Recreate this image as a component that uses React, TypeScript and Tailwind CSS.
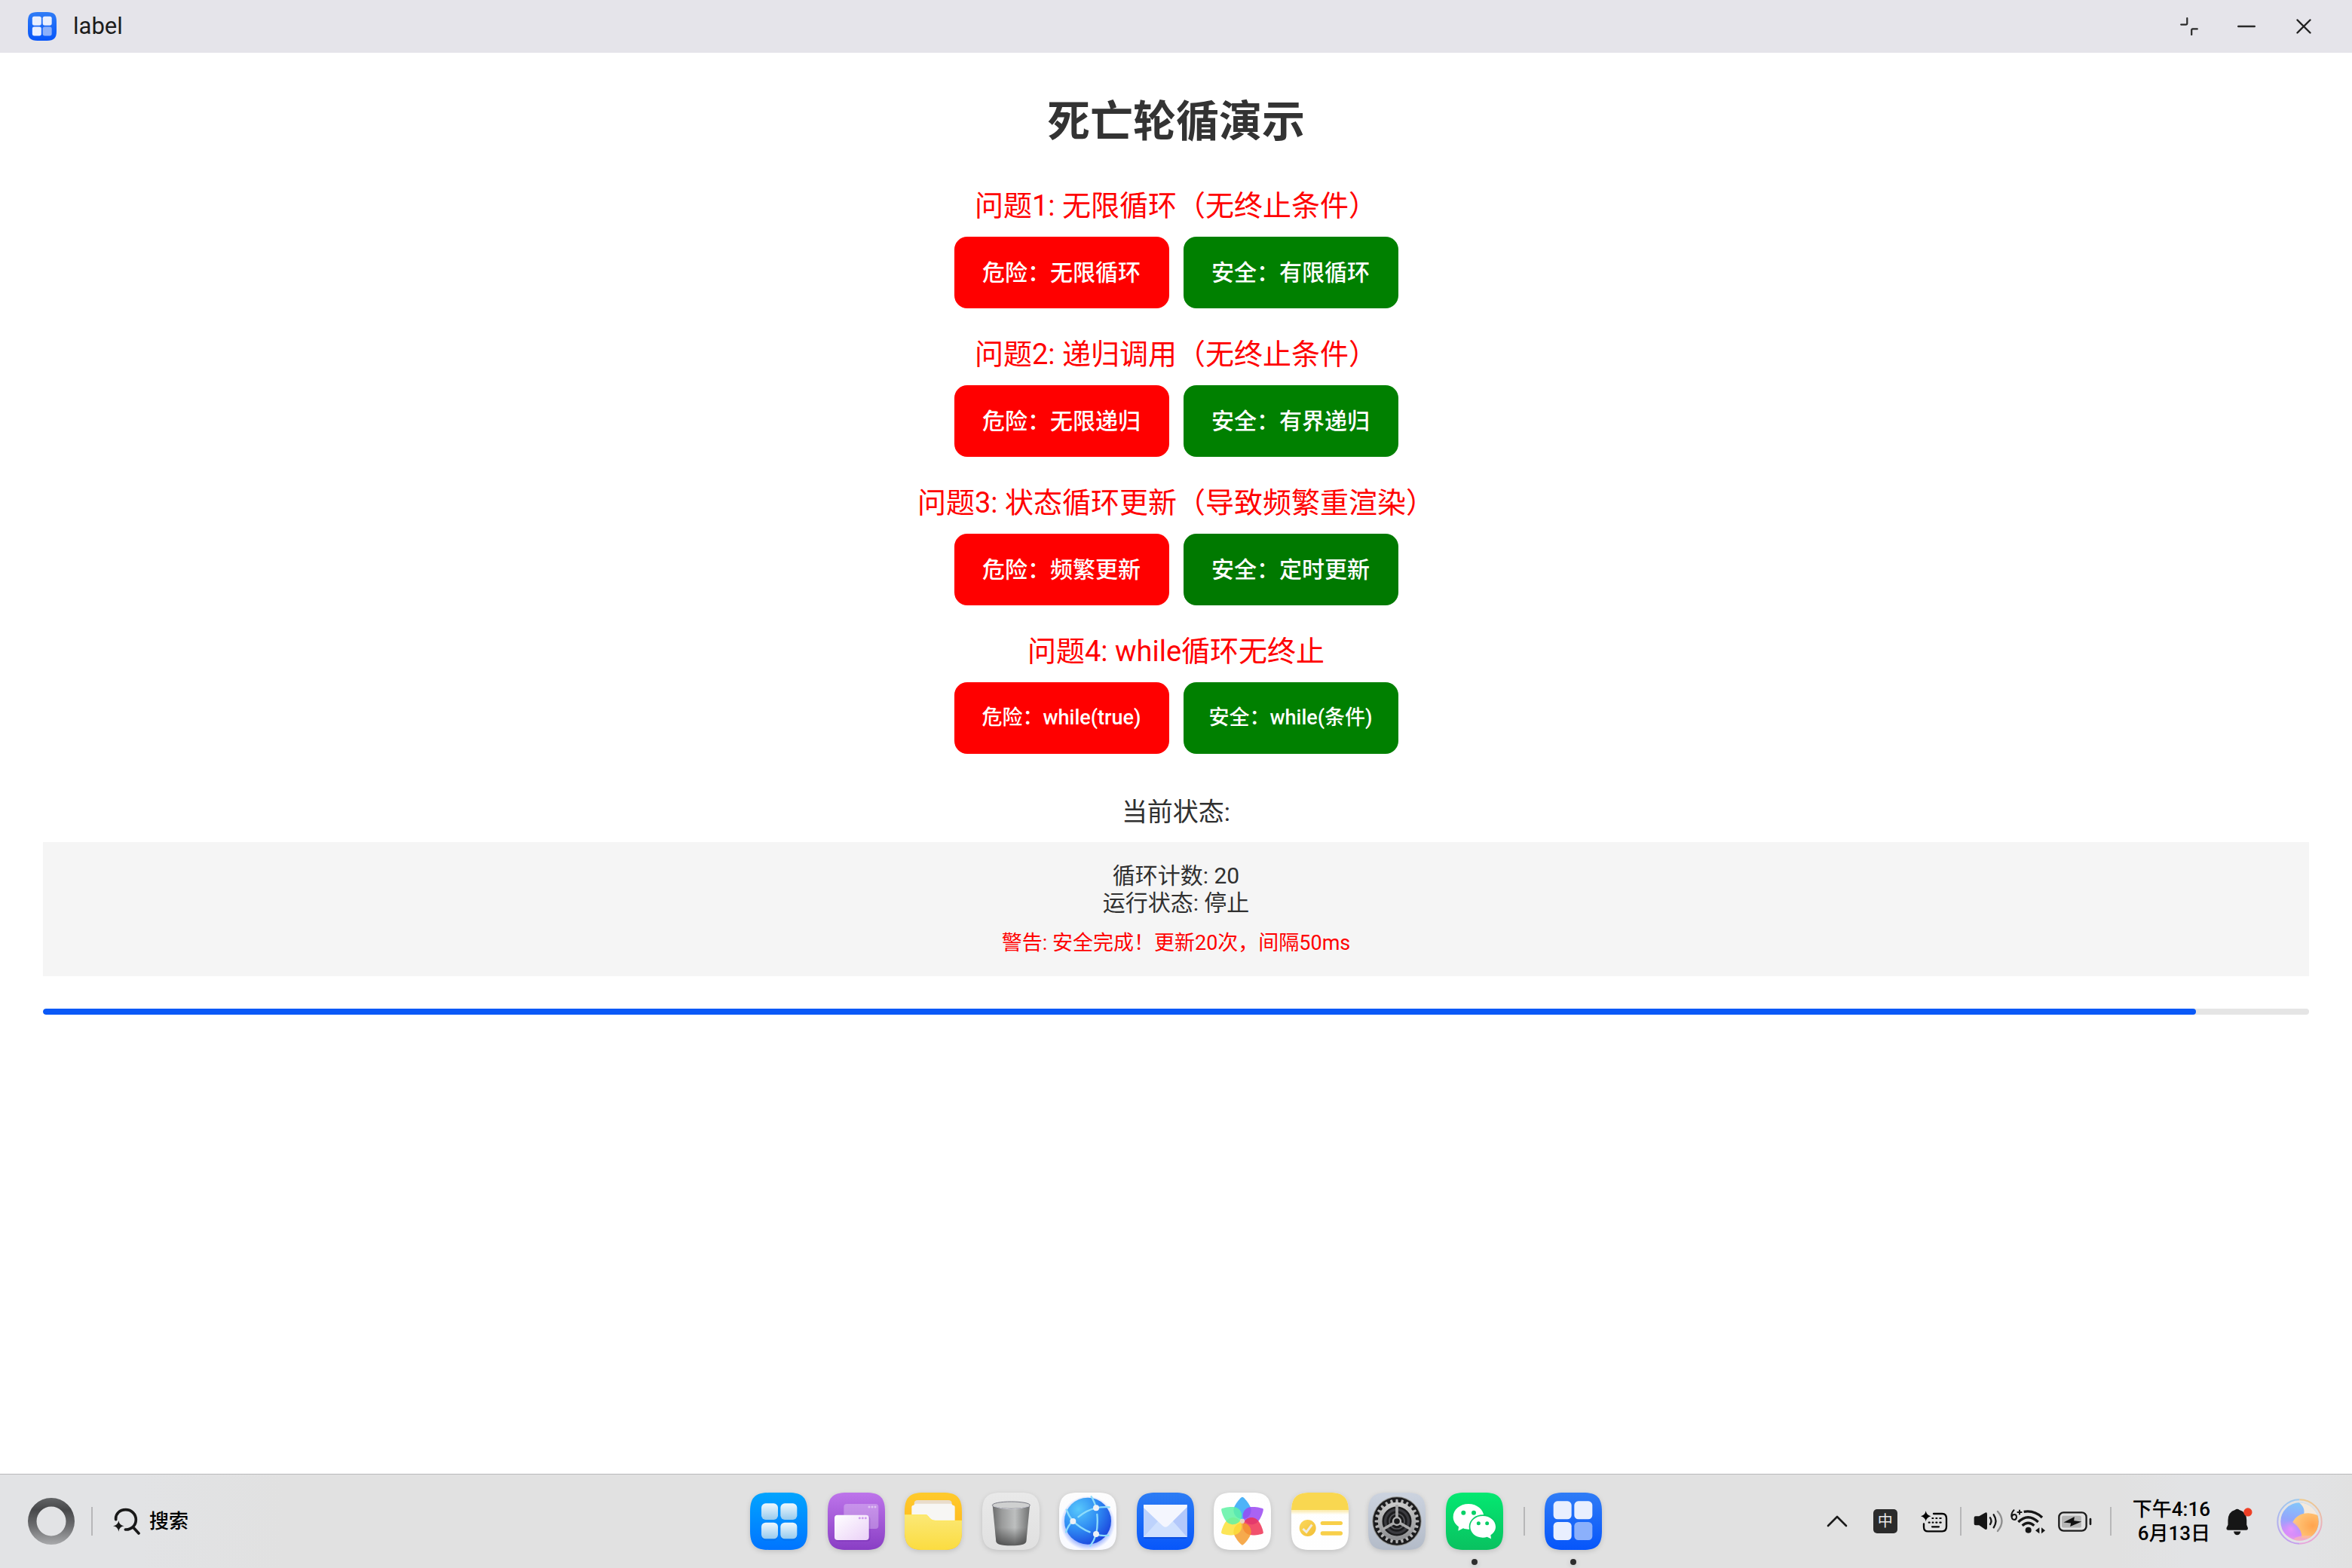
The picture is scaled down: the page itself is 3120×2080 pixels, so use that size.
import type { ReactNode } from "react";

const SQUIRCLE =
  "M0 76C0 20 20 0 76 0H152C208 0 228 20 228 76V152C228 208 208 228 152 228H76C20 228 0 208 0 152Z";

function Gradient({ id, from, to, diagonal = false }: { id: string; from: string; to: string; diagonal?: boolean }) {
  return (
    <linearGradient id={id} x1="0" y1="0" x2={diagonal ? "1" : "0"} y2="1">
      <stop offset="0" stopColor={from} />
      <stop offset="1" stopColor={to} />
    </linearGradient>
  );
}

function AppIcon({ id, from, to, size = "size-[76px]", children }: { id: string; from: string; to: string; size?: string; children: ReactNode }) {
  return (
    <svg viewBox="0 0 228 228" className={`${size} block`} aria-hidden="true">
      <defs>
        <Gradient id={`${id}-bg`} from={from} to={to} />
        <clipPath id={`${id}-clip`}>
          <path d={SQUIRCLE} />
        </clipPath>
      </defs>
      <path d={SQUIRCLE} fill={`url(#${id}-bg)`} />
      <g clipPath={`url(#${id}-clip)`}>{children}</g>
    </svg>
  );
}

function LabelIcon({ id, size }: { id: string; size?: string }) {
  return (
    <AppIcon id={id} from="#2f7cf6" to="#0655fa" size={size}>
      <g fill="#e9effe">
        <rect x="35" y="34" width="72" height="72" rx="16" />
        <rect x="118" y="34" width="72" height="72" rx="16" />
        <rect x="35" y="117" width="72" height="72" rx="16" />
        <rect x="118" y="117" width="72" height="72" rx="16" fill="#8bb0fb" />
      </g>
    </AppIcon>
  );
}

function LauncherIcon() {
  return (
    <AppIcon id="launcher" from="#02a4ff" to="#0074ff">
      <defs>
        <Gradient id="launcher-tile" from="#eff8fd" to="#96caee" />
      </defs>
      <g fill="#0060d8" opacity="0.25">
        <rect x="45" y="126" width="66" height="65" rx="17" />
        <rect x="121" y="126" width="66" height="65" rx="17" />
      </g>
      <g fill="url(#launcher-tile)">
        <rect x="45" y="43" width="66" height="65" rx="17" />
        <rect x="121" y="43" width="66" height="65" rx="17" />
        <rect x="45" y="119" width="66" height="65" rx="17" />
        <rect x="121" y="119" width="66" height="65" rx="17" />
      </g>
    </AppIcon>
  );
}

function WindowsIcon() {
  return (
    <AppIcon id="windows" from="#bd74ea" to="#893ec4">
      <defs>
        <Gradient id="windows-front" from="#ffffff" to="#ead0f7" diagonal />
      </defs>
      <rect x="64" y="45" width="138" height="99" rx="12" fill="#fff" opacity="0.28" />
      <g fill="#fff" opacity="0.45">
        <circle cx="165" cy="57" r="4.5" />
        <circle cx="177" cy="57" r="4.5" />
        <circle cx="189" cy="57" r="4.5" />
      </g>
      <rect x="29" y="94" width="140" height="100" rx="12" fill="#5d1c9c" opacity="0.25" />
      <rect x="27" y="89" width="137" height="100" rx="12" fill="url(#windows-front)" />
      <g fill="#cf9bee">
        <circle cx="127" cy="101" r="4.5" />
        <circle cx="139" cy="101" r="4.5" />
        <circle cx="151" cy="101" r="4.5" />
      </g>
    </AppIcon>
  );
}

function FilesIcon() {
  return (
    <AppIcon id="files" from="#ffca2c" to="#ffb016">
      <defs>
        <Gradient id="files-front" from="#fbe876" to="#fbdc40" />
      </defs>
      <path d="M38 60V44Q38 30 52 30H174Q188 30 188 44V60Z" fill="#e9dccb" />
      <path d="M28 140V58Q28 50 36 50L42 44H186L192 50Q200 50 200 58V140Z" fill="#f7f6f4" />
      <path d="M0 88H84C96 88 98 111 122 111H228V228H0Z" fill="url(#files-front)" />
      <path d="M0 89H84C96 89 98 112 122 112H228" fill="none" stroke="#ffe95c" strokeWidth="3" />
    </AppIcon>
  );
}

function TrashIcon() {
  return (
    <AppIcon id="trash" from="#e9e9e9" to="#e0e0e0">
      <defs>
        <linearGradient id="trash-body" x1="0" x2="1" y1="0" y2="0">
          <stop offset="0" stopColor="#6c6d6d" />
          <stop offset="0.25" stopColor="#9a9b9b" />
          <stop offset="0.6" stopColor="#bdbfbf" />
          <stop offset="1" stopColor="#707171" />
        </linearGradient>
        <linearGradient id="trash-shade" x1="0" x2="0" y1="0" y2="1">
          <stop offset="0.55" stopColor="#333" stopOpacity="0" />
          <stop offset="1" stopColor="#333" stopOpacity="0.7" />
        </linearGradient>
      </defs>
      <path d="M41 52L55 194Q58 211 115 211Q172 211 175 194L189 52Z" fill="url(#trash-body)" />
      <path d="M41 52L55 194Q58 211 115 211Q172 211 175 194L189 52Z" fill="url(#trash-shade)" />
      <ellipse cx="115" cy="50" rx="75" ry="14" fill="#cfd0d0" stroke="#777882" strokeWidth="3" />
      <path d="M44 54Q115 78 186 54" fill="none" stroke="#c9c9d0" strokeWidth="3" />
    </AppIcon>
  );
}

function BrowserIcon() {
  return (
    <AppIcon id="browser" from="#fdfdfd" to="#f9faff">
      <defs>
        <radialGradient id="browser-globe" cx="0.3" cy="0.25" r="0.85">
          <stop offset="0" stopColor="#58c8fb" />
          <stop offset="0.5" stopColor="#2f8cf3" />
          <stop offset="1" stopColor="#1a40dc" />
        </radialGradient>
        <radialGradient id="browser-glow">
          <stop offset="0.75" stopColor="#4a74ff" stopOpacity="0.6" />
          <stop offset="1" stopColor="#4a74ff" stopOpacity="0" />
        </radialGradient>
        <clipPath id="browser-clip">
          <circle cx="114" cy="113" r="93" />
        </clipPath>
      </defs>
      <circle cx="114" cy="121" r="108" fill="url(#browser-glow)" />
      <circle cx="114" cy="113" r="93" fill="url(#browser-globe)" />
      <g clipPath="url(#browser-clip)" fill="none" stroke="#8edcfb" strokeWidth="7" strokeLinecap="round">
        <path d="M76 97Q108 70 147 61Q172 56 200 58" />
        <path d="M147 61Q140 34 128 16" />
        <path d="M151 87Q155 130 147 165Q139 192 124 212" />
        <path d="M55 113Q86 144 122 157" />
        <path d="M147 165Q168 174 196 170" />
        <path d="M55 113Q38 94 29 68" />
        <path d="M55 113Q34 132 27 158" />
      </g>
      <g fill="#eef1f6">
        <circle cx="55" cy="114" r="12" />
        <circle cx="147" cy="61" r="12" />
        <circle cx="147" cy="165" r="12" />
      </g>
    </AppIcon>
  );
}

function MailIcon() {
  return (
    <AppIcon id="mail" from="#2c7cf4" to="#0756fa">
      <defs>
        <Gradient id="mail-body" from="#a5bffb" to="#dbe9fe" />
        <clipPath id="mail-clip">
          <rect x="27" y="48" width="173" height="129" rx="10" />
        </clipPath>
      </defs>
      <rect x="27" y="54" width="173" height="129" rx="10" fill="#053bbd" opacity="0.4" />
      <g clipPath="url(#mail-clip)">
        <rect x="27" y="48" width="173" height="129" fill="url(#mail-body)" />
        <path d="M27 48L95 112L27 177Z" fill="#bdd2fc" />
        <path d="M200 48L132 112L200 177Z" fill="#b3c8fb" />
        <path d="M27 177L86 112H142L200 177Z" fill="#cfe0fe" />
        <path d="M27 48H200V58L126 131Q114 143 102 131L27 60Z" fill="#f4f6fe" />
      </g>
    </AppIcon>
  );
}

const PETALS = [
  { color: "#2ea6f7", turn: 0 },
  { color: "#9a48f2", turn: 60 },
  { color: "#ee3154", turn: 120 },
  { color: "#f59b2e", turn: 180 },
  { color: "#fbe039", turn: 240 },
  { color: "#5ff2a4", turn: 300 },
];

function GalleryIcon() {
  return (
    <AppIcon id="gallery" from="#ffffff" to="#fefefe">
      {PETALS.map((p) => (
        <path
          key={p.color}
          d="M0 -96C6 -96 35 -62 35 -44C35 -22 19 -8 0 -8C-19 -8 -35 -22 -35 -44C-35 -62 -6 -96 0 -96Z"
          fill={p.color}
          opacity="0.85"
          transform={`translate(114 113) rotate(${p.turn})`}
        />
      ))}
      <circle cx="114" cy="113" r="9" fill="#e8d6c0" />
    </AppIcon>
  );
}

function NotesIcon() {
  return (
    <AppIcon id="notes" from="#ffffff" to="#fefefe">
      <defs>
        <Gradient id="notes-fade" from="#fbe9a8" to="#ffffff" />
        <Gradient id="notes-circle" from="#fbd95c" to="#f2be36" diagonal />
      </defs>
      <rect width="228" height="70" fill="#f9d750" />
      <rect y="70" width="228" height="18" fill="url(#notes-fade)" />
      <circle cx="65" cy="141" r="33" fill="url(#notes-circle)" />
      <path d="M46 144L60 157L82 128" fill="none" stroke="#efece4" strokeWidth="9" />
      <g fill="#f8cf49">
        <rect x="116" y="114" width="88" height="15" rx="7.5" />
        <rect x="116" y="154" width="88" height="16" rx="8" />
      </g>
    </AppIcon>
  );
}

function SettingsIcon() {
  const teeth = Array.from({ length: 24 }, (_, i) => i * 15);
  return (
    <AppIcon id="settings" from="#ccd3df" to="#b3bbc8">
      <defs>
        <Gradient id="settings-metal" from="#c9c9c9" to="#8f9093" />
      </defs>
      <circle cx="114" cy="114" r="98" fill="#8d8d88" />
      <circle cx="114" cy="114" r="95" fill="#1b1b1d" />
      <g fill="#b4b4b5">
        {teeth.map((a) => (
          <path key={a} d="M108 44L110 26H118L120 44Z" transform={`rotate(${a} 114 114)`} />
        ))}
      </g>
      <circle cx="114" cy="114" r="67" fill="none" stroke="url(#settings-metal)" strokeWidth="17" />
      <circle cx="114" cy="114" r="46" fill="none" stroke="#3a3a3f" strokeWidth="10" />
      <circle cx="114" cy="114" r="30" fill="none" stroke="#55555a" strokeWidth="5" />
      <g stroke="#a9a9aa" strokeWidth="11">
        <path d="M114 100V48" />
        <path d="M114 100V48" transform="rotate(120 114 114)" />
        <path d="M114 100V48" transform="rotate(240 114 114)" />
      </g>
      <circle cx="114" cy="114" r="15" fill="#1b1b1d" stroke="#b0b0b1" strokeWidth="7" />
    </AppIcon>
  );
}

function WechatIcon() {
  return (
    <AppIcon id="wechat" from="#04e871" to="#09c160">
      <path
        d="M90 45C56 45 29 68 29 97C29 113 37 126 51 136L49 152L69 142C76 145 83 146 90 146C124 146 151 124 151 96C151 68 124 45 90 45Z"
        fill="#fff"
      />
      <circle cx="70" cy="80" r="9" fill="#06d167" />
      <circle cx="111" cy="80" r="9" fill="#06d167" />
      <path
        d="M147 93C118 93 97 112 97 136C97 160 118 179 147 179C153 179 159 178 164 176L180 184L178 169C191 161 198 149 198 136C198 112 176 93 147 93Z"
        fill="#fff"
        stroke="#07cc66"
        strokeWidth="10"
        paintOrder="stroke"
      />
      <circle cx="130" cy="122" r="7.5" fill="#07cc66" />
      <circle cx="164" cy="122" r="7.5" fill="#07cc66" />
    </AppIcon>
  );
}

function RestoreGlyph() {
  return (
    <svg viewBox="0 0 24 24" className="block size-6" fill="none" stroke="#2a2a2a" strokeWidth="2.2" strokeLinecap="round" aria-hidden="true">
      <path d="M1.2 9.6H8Q9.3 9.6 9.3 8.3V1.2M15.2 23V17Q15.2 15.4 16.8 15.4H22.8" />
    </svg>
  );
}

function MinimizeGlyph() {
  return (
    <svg viewBox="0 0 24 24" className="block size-6" stroke="#2a2a2a" strokeWidth="2.4" strokeLinecap="round" aria-hidden="true">
      <path d="M1.2 12H22.8" />
    </svg>
  );
}

function CloseGlyph() {
  return (
    <svg viewBox="0 0 24 24" className="block size-6" stroke="#222" strokeWidth="2.4" strokeLinecap="round" aria-hidden="true">
      <path d="M3.5 3.5L20.5 20.5M20.5 3.5L3.5 20.5" />
    </svg>
  );
}

function RingIcon() {
  return (
    <svg viewBox="0 0 64 64" className="block size-16" aria-hidden="true">
      <defs>
        <linearGradient id="ring" x1="0" y1="0" x2="0" y2="1">
          <stop offset="0" stopColor="#626466" />
          <stop offset="0.25" stopColor="#47484a" />
          <stop offset="0.6" stopColor="#6c6d6f" />
          <stop offset="1" stopColor="#a9aaac" />
        </linearGradient>
      </defs>
      <path fillRule="evenodd" fill="url(#ring)" d="M32 1A31 31 0 1 1 32 63A31 31 0 1 1 32 1ZM32 12.5A19.5 19.5 0 1 0 32 51.5A19.5 19.5 0 1 0 32 12.5Z" />
    </svg>
  );
}

function SearchIcon() {
  return (
    <svg viewBox="450 178 108 108" className="block size-9" fill="none" stroke="#191919" strokeWidth="11" strokeLinecap="round" aria-hidden="true">
      <path d="M461 225C459 202 477 186 500 186C524 186 541 204 541 226C541 248 524 266 499 265M530 256L552 280" />
      <path d="M472 230Q475 248 494 251Q475 254 472 273Q469 254 450 251Q469 248 472 230Z" fill="#191919" stroke="none" />
    </svg>
  );
}

function ChevronIcon() {
  return (
    <svg viewBox="0 0 28 16" className="block h-4 w-7" fill="none" stroke="#1a1a1a" strokeWidth="2.6" strokeLinecap="round" strokeLinejoin="round" aria-hidden="true">
      <path d="M2 14L14 2L26 14" />
    </svg>
  );
}

function KeyboardIcon() {
  return (
    <svg viewBox="447 159 108 87" className="block h-[29px] w-9" fill="none" stroke="#050505" strokeWidth="7" strokeLinecap="round" aria-hidden="true">
      <path d="M498 171H532Q549 171 549 190V222Q549 241 532 241H476Q459 241 459 224V211" />
      <path d="M493 189H496M508 189H511M523 189H527M479 206H482M494 206H496M508 206H511M523 206H527M492 223H519" strokeWidth="6.5" />
      <path d="M467 160Q470 177 487 181Q470 185 467 202Q464 185 447 181Q464 177 467 160Z" fill="#050505" stroke="none" />
    </svg>
  );
}

function VolumeIcon() {
  return (
    <svg viewBox="653 161 120 90" className="block h-[30px] w-10" fill="none" strokeLinecap="round" aria-hidden="true">
      <path d="M661 186H675L699 172Q707 168 707 178V232Q707 242 699 238L675 222H661Q655 222 655 216V192Q655 186 661 186Z" fill="#161616" />
      <path d="M719 192Q728 205 719 218" stroke="#161616" strokeWidth="7" />
      <path d="M733 180Q750 205 733 231" stroke="#161616" strokeWidth="7" />
      <path d="M749 167Q782 205 749 245" stroke="#8f8f8f" strokeWidth="7" />
    </svg>
  );
}

function WifiIcon() {
  return (
    <svg viewBox="801 150 138 102" className="block h-[34px] w-[46px]" fill="none" stroke="#161616" aria-hidden="true">
      <path d="M854 163Q896 156 927 186" strokeWidth="10" />
      <path d="M832 204Q871 166 911 204" strokeWidth="10" />
      <path d="M848 218Q871 197 895 218" strokeWidth="10" />
      <circle cx="872" cy="236" r="12" fill="#161616" stroke="none" />
      <path d="M816 155Q803 168 805 182Q807 195 816 195Q825 195 825 184Q825 174 816 174Q808 174 806 184" strokeWidth="6" />
      <path d="M837 155V175M827 165H847" strokeWidth="6" />
      <path d="M916 226V250L900 238ZM924 226V250L939 238Z" fill="#161616" stroke="none" />
    </svg>
  );
}

function BatteryIcon() {
  return (
    <svg viewBox="992 162 134 80" className="block h-[27px] w-[45px]" fill="none" aria-hidden="true">
      <rect x="996" y="166" width="108" height="72" rx="18" stroke="#1c1c1c" strokeWidth="7" />
      <rect x="1007" y="179" width="77" height="47" rx="6" fill="#b5b5b5" />
      <path d="M1057 183L1014 205L1043 208L1040 221L1085 202L1055 198Z" fill="#111" />
      <path d="M1120 192V212" stroke="#1c1c1c" strokeWidth="8" strokeLinecap="round" />
    </svg>
  );
}

function BellIcon() {
  return (
    <svg viewBox="520 145 105 112" className="block h-[37px] w-[35px]" aria-hidden="true">
      <path d="M555 154Q564 146 573 154Q601 162 602 195V214L607 226Q608 235 600 235H528Q520 235 521 226L527 214V195Q528 162 555 154Z" fill="#161616" />
      <path d="M550 240H578Q575 255 564 255Q553 255 550 240Z" fill="#161616" />
      <circle cx="607" cy="163" r="17" fill="#ee4026" />
    </svg>
  );
}

function AssistantIcon() {
  return (
    <svg viewBox="0 0 184 184" className="block size-[61px]" aria-hidden="true">
      <defs>
        <Gradient id="orb-side" from="#eec98c" to="#e7a3dc" />
        <Gradient id="orb-left" from="#9ec9ee" to="#c49cee" />
        <linearGradient id="orb-blue" x1="0.6" y1="0" x2="0.4" y2="1">
          <stop offset="0" stopColor="#7fd0fb" />
          <stop offset="0.5" stopColor="#94a5fb" />
          <stop offset="0.8" stopColor="#d68bfb" />
          <stop offset="1" stopColor="#f7a8d0" />
        </linearGradient>
        <radialGradient id="orb-orange" cx="0.7" cy="0.5" r="0.8">
          <stop offset="0" stopColor="#ffa44e" />
          <stop offset="1" stopColor="#ffcf85" />
        </radialGradient>
        <radialGradient id="orb-pink">
          <stop offset="0" stopColor="#ea92fb" />
          <stop offset="1" stopColor="#d98dfb" stopOpacity="0" />
        </radialGradient>
        <clipPath id="orb-clip">
          <circle cx="92" cy="92" r="76" />
        </clipPath>
      </defs>
      <path d="M92 4A88 88 0 0 0 92 180" fill="none" stroke="url(#orb-left)" strokeWidth="6" />
      <path d="M92 4A88 88 0 0 1 92 180" fill="none" stroke="url(#orb-side)" strokeWidth="6" />
      <g clipPath="url(#orb-clip)">
        <rect width="184" height="184" fill="url(#orb-blue)" />
        <path d="M82 10Q118 34 108 64L184 70V0H82Z" fill="#f4e9dc" />
        <path d="M64 94Q84 58 126 58Q160 60 178 76V140Q150 168 100 156Q104 124 64 94Z" fill="url(#orb-orange)" />
        <path d="M70 160Q100 140 150 152L120 180H70Z" fill="#fbb4b4" opacity="0.7" />
        <circle cx="58" cy="122" r="36" fill="url(#orb-pink)" />
      </g>
    </svg>
  );
}

const SECTIONS = [
  { title: "问题1: 无限循环（无终止条件）", danger: "危险：无限循环", safe: "安全：有限循环", text: "text-[30px]", green: "bg-[#008000]" },
  { title: "问题2: 递归调用（无终止条件）", danger: "危险：无限递归", safe: "安全：有界递归", text: "text-[30px]", green: "bg-[#008000]" },
  { title: "问题3: 状态循环更新（导致频繁重渲染）", danger: "危险：频繁更新", safe: "安全：定时更新", text: "text-[30px]", green: "bg-[#007900]" },
  { title: "问题4: while循环无终止", danger: "危险：while(true)", safe: "安全：while(条件)", text: "text-[27px]", green: "bg-[#008000]" },
];

const DOCK = [
  { name: "应用中心", icon: <LauncherIcon /> },
  { name: "多任务", icon: <WindowsIcon /> },
  { name: "文件管理", icon: <FilesIcon /> },
  { name: "回收站", icon: <TrashIcon /> },
  { name: "浏览器", icon: <BrowserIcon /> },
  { name: "邮件", icon: <MailIcon /> },
  { name: "图库", icon: <GalleryIcon /> },
  { name: "备忘录", icon: <NotesIcon /> },
  { name: "设置", icon: <SettingsIcon /> },
  { name: "微信", icon: <WechatIcon />, running: true },
];

function DockButton({ name, icon, running = false }: { name: string; icon: ReactNode; running?: boolean }) {
  return (
    <button type="button" aria-label={name} className="relative drop-shadow-[0_2px_3px_rgba(0,0,0,0.14)]">
      {icon}
      {running && <span className="absolute -bottom-5 left-1/2 size-2 -translate-x-1/2 rounded-full bg-[#2d2d2d]" />}
    </button>
  );
}

function Divider({ className = "" }: { className?: string }) {
  return <span className={`h-[38px] w-0.5 bg-[#b7b7b8] ${className}`} />;
}

export default function App() {
  const progress = 95;
  return (
    <div lang="zh-CN" className="flex min-h-screen flex-col bg-white font-[Roboto,'Noto_Sans_CJK_SC',sans-serif] text-[#303030]">
      <header className="flex h-[70px] items-center bg-[#e5e4ea] pr-[52px] pl-[37px]">
        <LabelIcon id="title" size="size-[38px]" />
        <span className="ml-[22px] text-[31px] leading-9 text-[#1c1c1c]">label</span>
        <div className="ml-auto flex gap-[52px]">
          <button type="button" aria-label="还原"><RestoreGlyph /></button>
          <button type="button" aria-label="最小化"><MinimizeGlyph /></button>
          <button type="button" aria-label="关闭"><CloseGlyph /></button>
        </div>
      </header>

      <main className="flex flex-1 flex-col px-[57px] pt-[59px]">
        <h1 className="text-center text-[57px] leading-[66px] font-bold text-[#333]">死亡轮循演示</h1>

        <div className="mt-14 flex flex-col gap-[39px]">
          {SECTIONS.map((s) => (
            <section key={s.title} className="flex flex-col items-center gap-[19px]">
              <h2 className="text-[38px] leading-[44px] text-[#f00]">{s.title}</h2>
              <div className="flex gap-[19px]">
                <button type="button" className={`h-[95px] w-[285px] rounded-[17px] bg-[#f00] font-medium text-white ${s.text}`}>{s.danger}</button>
                <button type="button" className={`h-[95px] w-[285px] rounded-[17px] font-medium text-white ${s.green} ${s.text}`}>{s.safe}</button>
              </div>
            </section>
          ))}
        </div>

        <h2 className="mt-[57px] text-center text-[34px] leading-10">当前状态:</h2>
        <div className="mt-5 bg-[#f5f5f5] pt-[27px] pb-7 text-center text-[30px] leading-9">
          <p>循环计数: 20</p>
          <p>运行状态: 停止</p>
          <p className="mt-[19px] text-[27px] leading-8 text-[#f00]">警告: 安全完成！更新20次，间隔50ms</p>
        </div>

        <div role="progressbar" aria-label="进度" aria-valuenow={progress} className="mt-[43px] h-2 overflow-hidden rounded-full bg-[#e5e5e5]">
          <div className="h-full rounded-full bg-[#0a59f7]" style={{ width: `${progress}%` }} />
        </div>
      </main>

      <footer className="grid h-[125px] grid-cols-[1fr_auto_1fr] items-center border-t border-[#b9b9ba] bg-[linear-gradient(90deg,#e2e3e5_0%,#e2e3e5_6%,#e1e1e1_12%,#e1e1e1_90%,#e2e3e5_93%,#e2e3e5_98%,#e1e1e1_100%)] text-black">
        <div className="flex items-center pl-9">
          <button type="button" aria-label="主页"><RingIcon /></button>
          <Divider className="ml-[21px]" />
          <button type="button" className="ml-[27px] flex items-center gap-3 text-[26px] leading-8 font-medium">
            <SearchIcon />
            搜索
          </button>
        </div>

        <nav aria-label="程序坞" className="flex items-center">
          <div className="flex w-[999px] justify-between">
            {DOCK.map((d) => (
              <DockButton key={d.name} name={d.name} icon={d.icon} running={d.running} />
            ))}
          </div>
          <Divider className="mr-[26px] ml-[27px]" />
          <DockButton name="label" icon={<LabelIcon id="dock-label" />} running />
        </nav>

        <div className="flex items-center justify-end pr-[39px]">
          <button type="button" aria-label="展开"><ChevronIcon /></button>
          <button type="button" aria-label="输入法" className="ml-[34px] flex size-8 items-center justify-center rounded-[5px] bg-[#2b2b2b] text-[20px] leading-none text-[#e8e8e8]">中</button>
          <button type="button" aria-label="键盘" className="ml-[31px]"><KeyboardIcon /></button>
          <Divider className="ml-4" />
          <button type="button" aria-label="音量" className="ml-4"><VolumeIcon /></button>
          <button type="button" aria-label="无线网络" className="ml-[9px]"><WifiIcon /></button>
          <button type="button" aria-label="电池" className="ml-[17px]"><BatteryIcon /></button>
          <Divider className="ml-6" />
          <button type="button" className="ml-7 text-right text-[26px] leading-8 font-medium">
            <span className="block">下午4:16</span>
            <span className="block">6月13日</span>
          </button>
          <button type="button" aria-label="通知" className="ml-[21px]"><BellIcon /></button>
          <button type="button" aria-label="智能助手" className="ml-8"><AssistantIcon /></button>
        </div>
      </footer>
    </div>
  );
}
